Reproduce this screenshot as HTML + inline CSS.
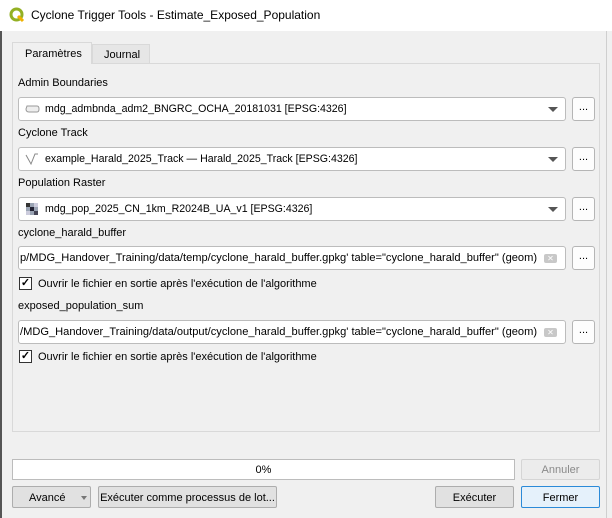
<!DOCTYPE html>
<html><head><meta charset="utf-8"><style>
*{box-sizing:border-box;margin:0;padding:0}
body{width:612px;height:518px;background:#f0f0f0;font-family:"Liberation Sans",sans-serif;font-size:11px;color:#000;position:relative;overflow:hidden}
.a{position:absolute;white-space:nowrap}
.title{left:0;top:0;width:612px;height:31px;background:#fff}
.lbl{left:18px}
.combo{left:18px;width:548px;height:24px;border:1px solid #bcbcbc;border-radius:3px;background:#fff;padding:5px 0 0 26px;overflow:hidden;font-size:10.6px}
.combo .arr{position:absolute;right:7px;top:9px;width:0;height:0;border-left:5px solid transparent;border-right:5px solid transparent;border-top:5px solid #555}
.btn{border:1px solid #b5b5b5;border-radius:3px;background:#fdfdfd;text-align:center}
.dots{left:572px;width:23px;height:24px;font-size:11px;padding-top:3px}
.field{left:18px;width:548px;height:24px;border:1px solid #bcbcbc;border-radius:3px;background:#fff;padding:5px 0 0 1px;overflow:hidden;font-size:11.1px}
.clr{position:absolute;right:8px;top:7px;width:13px;height:9px;background:#c8c8c8;border-radius:2px;color:#fff;font-size:8px;line-height:9px;text-align:center}
.cb{left:19px;width:13px;height:13px;border:1px solid #333;background:#fff;font-size:11px;line-height:11px;text-align:center;font-weight:bold}
.pb{background:#e1e1e1;border:1px solid #adadad;border-radius:2px}
</style></head><body>
<div class="a title"></div>
<div class="a" style="left:0;top:31px;width:2px;height:487px;background:#555"></div>
<div class="a" style="left:606px;top:31px;width:1px;height:487px;background:#cfcfcf"></div>
<svg class="a" style="left:9px;top:7px" width="16" height="16" viewBox="0 0 16 16"><circle cx="7.5" cy="7.5" r="5.5" fill="none" stroke="#93b023" stroke-width="3"/><path d="M9 9l5 5" stroke="#f0b100" stroke-width="3"/></svg>
<div class="a" style="left:31px;top:8px;font-size:12px">Cyclone Trigger Tools - Estimate_Exposed_Population</div>

<div class="a" style="left:12px;top:63px;width:588px;height:369px;border:1px solid #d9d9d9;background:#f0f0f0"></div>
<div class="a" style="left:12px;top:42px;width:80px;height:22px;border:1px solid #d9d9d9;border-bottom:none;background:#f0f0f0;padding:5px 0 0 12px">Paramètres</div>
<div class="a" style="left:92px;top:44px;width:58px;height:19px;border:1px solid #d9d9d9;border-bottom:none;background:#e6e6e6;padding:4px 0 0 11px">Journal</div>

<div class="a lbl" style="top:77px">Admin Boundaries</div>
<div class="a combo" style="top:97px"><svg class="a" style="left:6px;top:6px" width="15" height="10"><path d="M2 2h10q2 0 2 3t-2 3H4Q1 8 1 5z" fill="#eee" stroke="#999"/></svg>mdg_admbnda_adm2_BNGRC_OCHA_20181031 [EPSG:4326]<span class="arr"></span></div>
<div class="a btn dots" style="top:97px">...</div>

<div class="a lbl" style="top:127px">Cyclone Track</div>
<div class="a combo" style="top:147px"><svg class="a" style="left:6px;top:4px" width="15" height="14"><path d="M1 3l5 9 4-10 3 0" fill="none" stroke="#888"/></svg>example_Harald_2025_Track — Harald_2025_Track [EPSG:4326]<span class="arr"></span></div>
<div class="a btn dots" style="top:147px">...</div>

<div class="a lbl" style="top:177px">Population Raster</div>
<div class="a combo" style="top:197px"><svg class="a" style="left:7px;top:5px" width="12" height="12"><rect width="12" height="12" fill="#9aa4b4"/><rect width="4" height="4" fill="#333"/><rect x="8" y="0" width="4" height="4" fill="#ccd"/><rect x="4" y="4" width="4" height="4" fill="#223"/><rect x="0" y="8" width="4" height="4" fill="#ccd"/><rect x="8" y="8" width="4" height="4" fill="#445"/></svg>mdg_pop_2025_CN_1km_R2024B_UA_v1 [EPSG:4326]<span class="arr"></span></div>
<div class="a btn dots" style="top:197px">...</div>

<div class="a lbl" style="top:227px">cyclone_harald_buffer</div>
<div class="a field" style="top:246px">p/MDG_Handover_Training/data/temp/cyclone_harald_buffer.gpkg' table="cyclone_harald_buffer" (geom)<span class="clr">✕</span></div>
<div class="a btn dots" style="top:246px">...</div>
<div class="a cb" style="top:277px">✓</div>
<div class="a" style="left:38px;top:278px">Ouvrir le fichier en sortie après l'exécution de l'algorithme</div>

<div class="a lbl" style="top:300px">exposed_population_sum</div>
<div class="a field" style="top:320px">/MDG_Handover_Training/data/output/cyclone_harald_buffer.gpkg' table="cyclone_harald_buffer" (geom)<span class="clr">✕</span></div>
<div class="a btn dots" style="top:320px">...</div>
<div class="a cb" style="top:350px">✓</div>
<div class="a" style="left:38px;top:351px">Ouvrir le fichier en sortie après l'exécution de l'algorithme</div>

<div class="a" style="left:12px;top:459px;width:503px;height:21px;border:1px solid #bcbcbc;background:#fff;text-align:center;padding-top:4px">0%</div>
<div class="a pb" style="left:521px;top:459px;width:79px;height:21px;padding-top:4px;text-align:center;color:#8a8a8a;background:#ececec;border-color:#d5d5d5">Annuler</div>

<div class="a pb" style="left:12px;top:486px;width:79px;height:22px;padding:5px 0 0 16px">Avancé<span style="position:absolute;left:68px;top:9px;border-left:3px solid transparent;border-right:3px solid transparent;border-top:4px solid #777"></span></div>
<div class="a pb" style="left:98px;top:486px;width:179px;height:22px;padding-top:5px;text-align:center">Exécuter comme processus de lot...</div>
<div class="a pb" style="left:435px;top:486px;width:79px;height:22px;padding-top:5px;text-align:center">Exécuter</div>
<div class="a pb" style="left:521px;top:486px;width:79px;height:22px;padding-top:5px;text-align:center;border-color:#2b8ad8;background:#e5f1fb">Fermer</div>
</body></html>
